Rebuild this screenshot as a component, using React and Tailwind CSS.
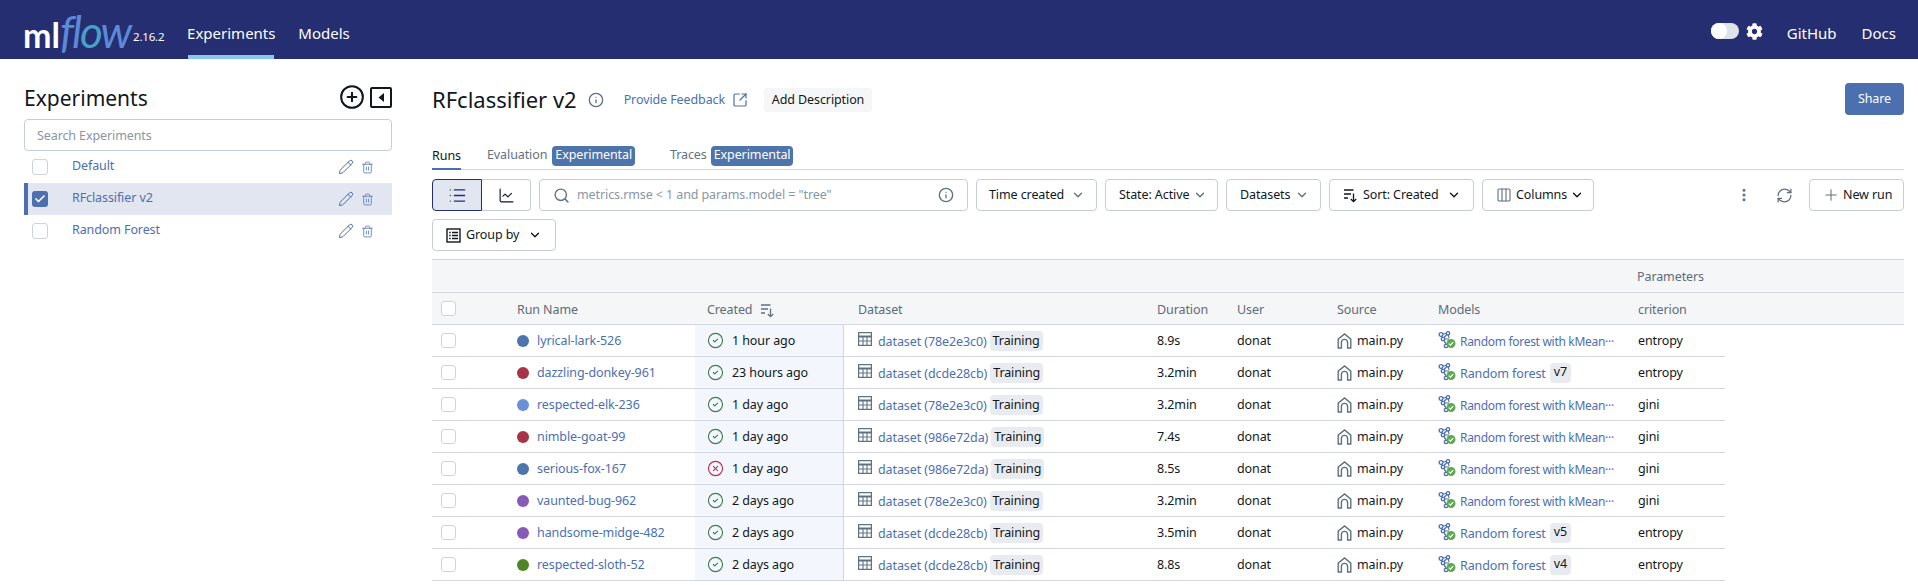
import React from "react";
import { CirclePlus, Pencil, Trash2, Info, SquareArrowOutUpRight, List, ChartLine, Search, ChevronDown, Columns3, EllipsisVertical, RefreshCw, Plus, CircleCheck, CircleX, Check } from "lucide-react";
import { FaCog } from "react-icons/fa";

const Collapse = () => (
  <svg width="22" height="21" viewBox="0 0 22 21" className="block"><rect x="1" y="1" width="20" height="19" rx="1" fill="none" stroke="#11171c" strokeWidth="2"/><path d="M14 6v9L8.5 10.5z" fill="#11171c"/></svg>
);
const SortIcon = ({ c = "#11171c" }) => (
  <svg width="15" height="15" viewBox="0 0 15 15" fill="none" stroke={c} strokeWidth="1.3"><path d="M1 2h9.5M1 6h7M1 10h4"/><path d="M10.5 5.5v8M7.8 11l2.7 2.7 2.7-2.7"/></svg>
);
const TableIcon = () => (
  <svg width="14" height="14" viewBox="0 0 14 14" fill="none" stroke="#5f7281" strokeWidth="1.3" className="shrink-0 -mt-[3px]"><rect x=".6" y=".6" width="12.8" height="12.8"/><path d="M.6 4.5h12.8" strokeWidth="2"/><path d="M5 5v8.4M9 5v8.4M.6 9h12.8" strokeWidth="1.1"/></svg>
);
const HomeIcon = () => (
  <svg width="15" height="16" viewBox="0 0 15 16" fill="none" stroke="#5f7281" strokeWidth="1.4" className="shrink-0"><path d="M1.2 15V6.2L7.5 1l6.3 5.2V15h-3.2V9.5a3 3 0 0 0-6.2 0V15z"/></svg>
);
const ModelIcon = () => (
  <svg width="18" height="18" viewBox="0 0 18 18" fill="none" className="shrink-0 -mt-[2px]">
    <path d="M3 3.5 10 2M3 3.5l2 4.5M10 2 5 8M10 2l1 5M3 3.5 9 15M5 8l4 7M5 8l6 0" stroke="#4c6fb0" strokeWidth="1.2"/>
    <circle cx="3" cy="3.5" r="1.9" fill="#fff" stroke="#4c6fb0" strokeWidth="1.3"/><circle cx="10" cy="2.3" r="1.7" fill="#fff" stroke="#4c6fb0" strokeWidth="1.3"/><circle cx="5" cy="8" r="1.7" fill="#fff" stroke="#4c6fb0" strokeWidth="1.3"/><circle cx="8" cy="15" r="1.7" fill="#fff" stroke="#4c6fb0" strokeWidth="1.3"/>
    <circle cx="13" cy="12.5" r="4.5" fill="#5fa84d"/><path d="m10.8 12.6 1.6 1.6 2.8-3" stroke="#fff" strokeWidth="1.2"/>
  </svg>
);
const GroupIcon = () => (
  <svg width="15" height="15" viewBox="0 0 15 15" fill="none" stroke="#11171c" strokeWidth="1.4" className="shrink-0"><rect x="1" y="1" width="13" height="13"/><path d="M3.2 4.5h1.5M6 4.5h6M3.2 7.5h1.5M6 7.5h6M3.2 10.5h1.5M6 10.5h6"/></svg>
);

const Btn = ({ className = "", children }) => (
  <div className={"h-8 flex items-center border border-[#c6ccd8] rounded text-[#11171c] " + className}>{children}</div>
);
const Chev = ({ c = "#5f7281" }) => <ChevronDown size={14} color={c} strokeWidth={2.4} />;

const Badge = () => (
  <span className="h-5 px-[3px] rounded bg-[#4d74ab] text-white flex items-center">Experimental</span>
);

const Box = () => <div className="w-[15px] h-[15px] rounded-[3px] border border-[#cdd3e0] bg-white" />;

const LONG = "Random forest with kMean···";
const runs = [
  ["lyrical-lark-526", "bg-[#4d74ab]", "1 hour ago", true, "78e2e3c0", "8.9s", LONG, null, "entropy"],
  ["dazzling-donkey-961", "bg-[#a83247]", "23 hours ago", true, "dcde28cb", "3.2min", "Random forest", "v7", "entropy"],
  ["respected-elk-236", "bg-[#6a8fd8]", "1 day ago", true, "78e2e3c0", "3.2min", LONG, null, "gini"],
  ["nimble-goat-99", "bg-[#a83247]", "1 day ago", true, "986e72da", "7.4s", LONG, null, "gini"],
  ["serious-fox-167", "bg-[#4d74ab]", "1 day ago", false, "986e72da", "8.5s", LONG, null, "gini"],
  ["vaunted-bug-962", "bg-[#855ab8]", "2 days ago", true, "78e2e3c0", "3.2min", LONG, null, "gini"],
  ["handsome-midge-482", "bg-[#855ab8]", "2 days ago", true, "dcde28cb", "3.5min", "Random forest", "v5", "entropy"],
  ["respected-sloth-52", "bg-[#4f8524]", "2 days ago", true, "dcde28cb", "8.8s", "Random forest", "v4", "entropy"],
];

const cols = "grid grid-cols-[73px_190px_149px_301px_80px_100px_101px_200px_99px]";

const Exp = ({ name, active }) => (
  <div className={"h-8 flex items-center " + (active ? "bg-[#e2e6f0] border-l-4 border-[#4c6fb0] pl-1" : "pl-2")}>
    {active ? (
      <div className="w-4 h-4 rounded-[3px] bg-[#4c6fb0] flex items-center justify-center"><Check size={12} color="#fff" strokeWidth={3.5} /></div>
    ) : (
      <div className="w-4 h-4 rounded-[3px] border border-[#cdd3e0] bg-white" />
    )}
    <span className="ml-6 text-[#4c6fb0] flex-1 pb-[1px]">{name}</span>
    <Pencil size={16} color="#4c6fb0" strokeWidth={1.5} />
    <Trash2 size={13} color="#5f7fb8" strokeWidth={1.6} className="ml-[7px] mr-[18px]" />
  </div>
);

export default function App() {
  return (
    <div className="w-full h-[585px] overflow-hidden bg-white text-[12.5px] tracking-[-0.1px] text-[#11171c] font-['Noto_Sans',sans-serif]">
      <header className="h-[59px] bg-[#252e70] flex items-center text-white tracking-normal">
        <div className="ml-[23px] w-[110px] flex items-baseline leading-none font-['Lato',sans-serif] pt-[2px]">
          <span className="text-[34px] font-bold">ml</span>
          <span className="text-[44px] italic text-[#5b8ad8] tracking-[-2px]">fl<span className="text-[#4a9fc8]">o</span>w</span>
        </div>
        <span className="text-[11.5px] mt-[15px] tracking-[-0.2px]">2.16.2</span>
        <div className="ml-6 w-[86px] h-full flex items-center justify-center border-b-4 border-[#8dc6ec] pt-[11px] text-[15px]">Experiments</div>
        <div className="ml-6 text-[15px] pt-[7px]">Models</div>
        <div className="ml-auto flex items-center">
          <div className="w-7 h-4 mt-[3px] rounded-full bg-[#dfe3ea] flex items-center"><div className="w-4 h-4 rounded-full bg-white" /></div>
          <FaCog size={17} color="#fff" className="ml-[7px] mt-[3px]" />
          <span className="ml-[24px] text-[15px] pt-[7px]">GitHub</span>
          <span className="ml-[25px] mr-[22px] text-[15px] pt-[7px]">Docs</span>
        </div>
      </header>
      <div className="flex">
        <aside className="w-[432px] pl-6 pr-10 pt-6 shrink-0">
          <div className="h-9 flex items-center justify-between">
            <span className="text-[21px] leading-none pb-[6px] tracking-normal">Experiments</span>
            <div className="flex items-center gap-[5px] pb-2">
              <CirclePlus size={26} color="#11171c" strokeWidth={1.9} />
              <Collapse />
            </div>
          </div>
          <div className="h-8 border border-[#c6ccd8] rounded flex items-center pl-3 pt-[2px] text-[#8a96a3]">Search Experiments</div>
          <Exp name="Default" />
          <Exp name="RFclassifier v2" active />
          <Exp name="Random Forest" />
        </aside>
        <main className="flex-1 pt-6 pr-[14px]">
          <div className="h-8 flex items-center">
            <span className="text-[22px] leading-none tracking-normal">RFclassifier v2</span>
            <Info size={16} color="#5f7281" className="ml-[11px] mt-[2px]" />
            <span className="ml-5 text-[#4c6fb0] mt-[3px]">Provide Feedback</span>
            <SquareArrowOutUpRight size={16} color="#4c6fb0" strokeWidth={1.8} className="ml-[7px] mt-[2px]" />
            <div className="ml-[16px] mt-[2px] pt-px h-6 w-[108px] rounded bg-[#f5f6f8] flex items-center justify-center">Add Description</div>
            <div className="ml-auto w-[59px] h-8 rounded bg-[#4c6fb0] text-white flex items-center justify-center">Share</div>
          </div>
          <div className="mt-[30px] h-[25px] border-b border-[#d4d7e0] flex items-start">
            <div className="h-[25px] w-[29px] border-b-2 border-[#4c6fb0] flex items-center justify-center pb-[1px]">Runs</div>
            <div className="flex items-center h-5 ml-[26px] text-[#5f7281] gap-[5px] pt-px">Evaluation <span className="text-white"><Badge /></span></div>
            <div className="flex items-center h-5 ml-[35px] text-[#5f7281] gap-[4px] pt-px">Traces <span className="text-white"><Badge /></span></div>
          </div>
          <div className="mt-[9px] flex items-center">
            <div className="flex w-[99px] h-8">
              <div className="w-[50px] border border-[#252e70] rounded-l bg-[#e2e6f0] flex items-center justify-center"><List size={19} strokeWidth={1.6} color="#252e70" /></div>
              <div className="flex-1 border border-l-0 border-[#c6ccd8] rounded-r flex items-center justify-center"><ChartLine size={17} strokeWidth={1.6} color="#11171c" /></div>
            </div>
            <Btn className="ml-2 w-[429px] px-[13px]">
              <Search size={17} color="#5f7281" />
              <span className="ml-[7px] text-[#8a96a3] flex-1 pt-px">metrics.rmse &lt; 1 and params.model = "tree"</span>
              <Info size={16} color="#5f7281" />
            </Btn>
            <Btn className="ml-2 w-[121px] pl-[12px]"><span className="flex-1 pt-px">Time created</span><span className="mr-[11px]"><Chev /></span></Btn>
            <Btn className="ml-2 w-[113px] pl-[13px]"><span className="flex-1 pt-px">State: Active</span><span className="mr-[10px]"><Chev /></span></Btn>
            <Btn className="ml-2 w-[95px] pl-[13px]"><span className="flex-1 pt-px">Datasets</span><span className="mr-[11px]"><Chev /></span></Btn>
            <Btn className="ml-2 w-[145px] pl-[13px]"><SortIcon /><span className="ml-[5px] flex-1 pt-px">Sort: Created</span><span className="mr-[12px]"><Chev c="#11171c" /></span></Btn>
            <Btn className="ml-2 w-[112px] pl-[13px]"><Columns3 size={16} color="#5f7281" strokeWidth={1.7} /><span className="ml-[4px] pt-px">Columns</span><span className="ml-[3px]"><Chev c="#11171c" /></span></Btn>
            <EllipsisVertical size={16} color="#5f7281" strokeWidth={2.6} className="ml-auto" />
            <RefreshCw size={17} color="#5f7281" strokeWidth={1.8} className="ml-6" />
            <Btn className="ml-[16px] w-[95px] pl-[12px]"><Plus size={18} color="#5f7281" strokeWidth={1.4} /><span className="ml-[3px] pt-px">New run</span></Btn>
          </div>
          <Btn className="mt-2 w-[124px] pl-[13px]"><GroupIcon /><span className="ml-[5px] flex-1 pt-px">Group by</span><span className="mr-[13px]"><Chev c="#11171c" /></span></Btn>
          <div className="mt-2 border-t border-[#d4d7e0] bg-[#f5f6f8] text-[#5f6b76]">
            <div className="h-[33px] border-b border-[#d4d7e0] flex items-center pl-[1205px] pt-[3px]">Parameters</div>
            <div className={cols + " h-8 border-b border-[#d4d7e0] items-center"}>
              <div className="pl-[9px]"><Box /></div>
              <div className="pl-3 pt-[3px]">Run Name</div>
              <div className="pl-3 pt-[3px] flex items-center gap-[8px]">Created <SortIcon c="#5f7281" /></div>
              <div className="pl-[14px] pt-[3px]">Dataset</div>
              <div className="pl-3 pt-[3px]">Duration</div>
              <div className="pl-3 pt-[3px]">User</div>
              <div className="pl-3 pt-[3px]">Source</div>
              <div className="pl-3 pt-[3px]">Models</div>
              <div className="pl-3 pt-[3px]">criterion</div>
            </div>
          </div>
          <div className="w-[1293px]">
            {runs.map((r) => (
              <div key={r[0]} className={cols + " h-8 border-b border-[#d4d7e0] items-center"}>
                <div className="pl-[9px]"><Box /></div>
                <div className="pl-3 flex items-center"><span className={"w-3 h-3 rounded-full mr-2 " + r[1]} /><span className="text-[#4c6fb0] pt-[2px]">{r[0]}</span></div>
                <div className="h-full bg-[#f3f7fd] border-r border-[#d4d7e0] pl-3 flex items-center">
                  {r[3] ? <CircleCheck size={17} color="#3f7d4a" strokeWidth={1.6} /> : <CircleX size={17} color="#b8304f" strokeWidth={1.6} />}
                  <span className="ml-2 pt-[2px]">{r[2]}</span>
                </div>
                <div className="pl-[14px] flex items-center">
                  <TableIcon />
                  <span className="ml-[6px] text-[#4c6fb0] pt-[3px]">dataset ({r[4]})</span>
                  <span className="ml-[3px] h-5 px-[3px] rounded bg-[#e9ebf0] flex items-center pt-px">Training</span>
                </div>
                <div className="pl-3 pt-[2px]">{r[5]}</div>
                <div className="pl-3 pt-[2px]">donat</div>
                <div className="pl-3 flex items-center"><HomeIcon /><span className="ml-[5px] pt-[2px]">main.py</span></div>
                <div className="pl-3 flex items-center">
                  <ModelIcon />
                  {r[7] ? (
                    <>
                      <span className="ml-[4px] text-[#4c6fb0] pt-[3px]">{r[6]}</span>
                      <span className="ml-1 h-5 px-1 rounded bg-[#e9ebf0] flex items-center">{r[7]}</span>
                    </>
                  ) : (
                    <span className="ml-[4px] text-[#4c6fb0] pt-[3px] text-[12px] tracking-[-0.3px] whitespace-nowrap">{r[6]}</span>
                  )}
                </div>
                <div className="pl-3 pt-[2px]">{r[8]}</div>
              </div>
            ))}
          </div>
        </main>
      </div>
    </div>
  );
}
